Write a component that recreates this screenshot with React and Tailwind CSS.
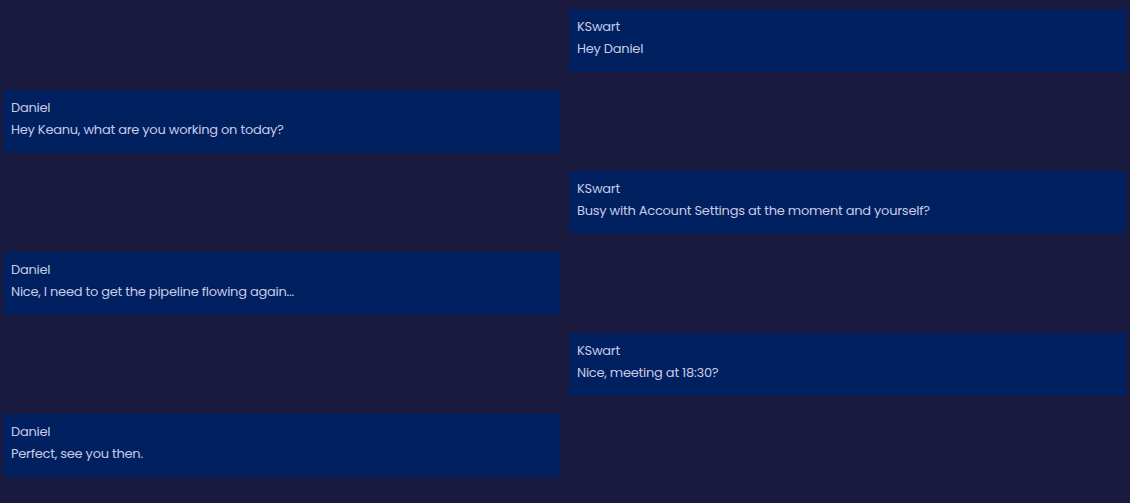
export default function App() {
  const msgs = [
    { me: true, name: "KSwart", text: "Hey Daniel" },
    { me: false, name: "Daniel", text: "Hey Keanu, what are you working on today?" },
    { me: true, name: "KSwart", text: "Busy with Account Settings at the moment and yourself?" },
    { me: false, name: "Daniel", text: "Nice, I need to get the pipeline flowing again..." },
    { me: true, name: "KSwart", text: "Nice, meeting at 18:30?" },
    { me: false, name: "Daniel", text: "Perfect, see you then." },
  ];
  return (
    <div className="w-[1130px] h-[503px] bg-[#1a1a3e] overflow-hidden" style={{ fontFamily: "Poppins, Inter, 'Open Sans', sans-serif" }}>
      <div className="flex flex-col gap-[18px] pt-[9px] pl-[3px] pr-[4px]">
        {msgs.map((m, i) => (
          <div key={i} className={`flex ${m.me ? "justify-end" : "justify-start"}`}>
            <div className="w-[557px] h-[63px] bg-[#012060] pl-[8px] pt-[8px] text-[13px] text-[#c9cbe6] tracking-[-0.25px]">
              <div className="leading-[20px]">{m.name}</div>
              <div className="leading-[20px] mt-[2px]">{m.text}</div>
            </div>
          </div>
        ))}
      </div>
    </div>
  );
}
